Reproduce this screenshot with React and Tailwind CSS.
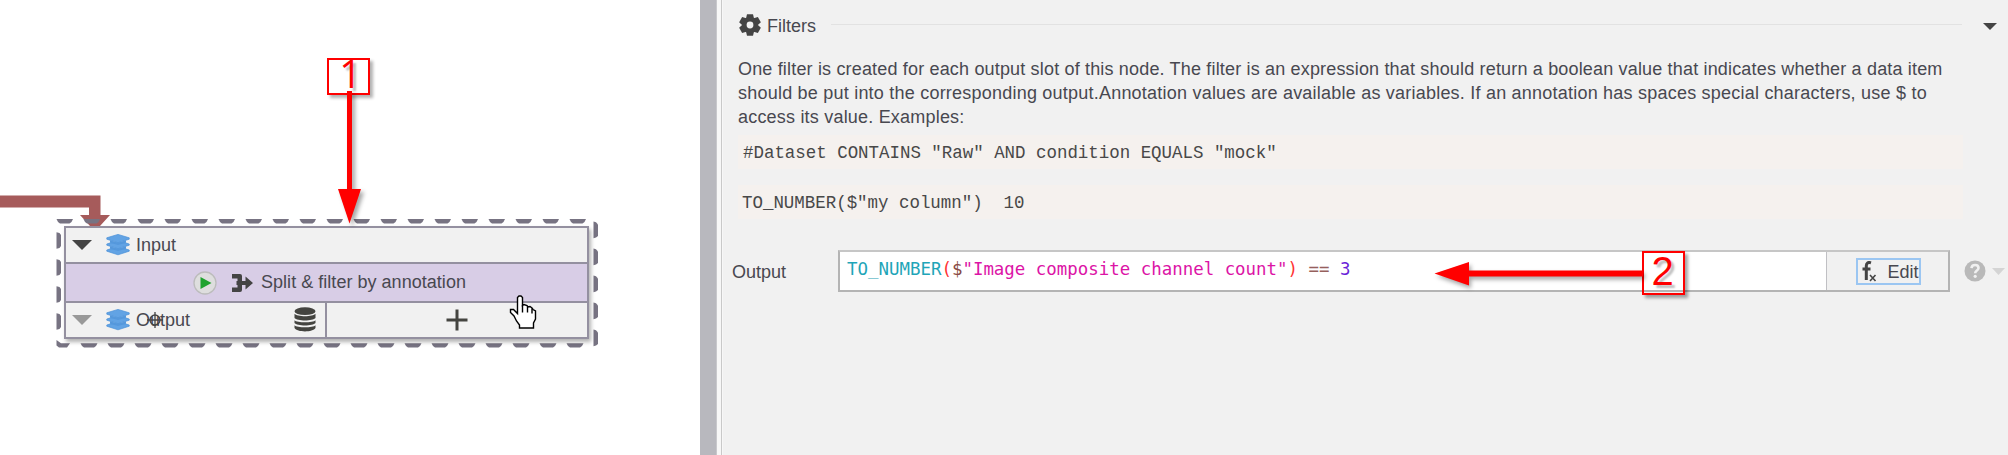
const range = (n) => Array.from({ length: n }, (_, i) => i);

function LayersIcon() {
  return (
    <svg className="h-[22px] w-[24px] shrink-0" viewBox="0 0 24 22">
      <g stroke="#4b90d8" strokeWidth="0.700" fill="#62a3e4">
        <path d="M.8 16L4.500 14.800H19.500L23.200 16V17.200L12 20.800L.8 17.200Z" />
        <path d="M.8 10L4.500 8.800H19.500L23.200 10V11.200L12 14.800L.8 11.200Z" />
        <path d="M.8 3.800L12 .4L23.200 3.800V5.200L12 8.800L.8 5.200Z" />
      </g>
      <path d="M4 6.300L12 8.800L20 6.300V8.800L12 11L4 8.800ZM4 12.300L12 14.800L20 12.300V14.800L12 17L4 14.800Z" fill="#5598dc" />
    </svg>
  );
}

function Triangle({ className }) {
  return (
    <svg className={className} viewBox="0 0 20 10" preserveAspectRatio="none">
      <path d="M0 0H20L10 10Z" fill="currentColor" />
    </svg>
  );
}

function DatabaseIcon() {
  return (
    <svg className="h-[25px] w-[22px]" viewBox="0 0 22 25" fill="#444440">
      <ellipse cx="11" cy="4.2" rx="10.5" ry="3.9" />
      <path d="M.5 6.7C3 10 19 10 21.500 6.700V11C19 14.300 3 14.300 .5 11Z" />
      <path d="M.5 13.200C3 16 19 16 21.500 13.200V16C19 19.300 3 19.300 .5 16Z" />
      <path d="M.5 18.200C3 21 19 21 21.500 18.200V21C19 25.500 3 25.500 .5 21Z" />
    </svg>
  );
}

function GearIcon() {
  return (
    <svg className="h-[22px] w-[22px] shrink-0" viewBox="-11 -11 22 22">
      <g fill="#444">
        <circle r="8" />
        {range(6).map((i) => (
          <path key={i} d="M-4 -6.500L-3 -10.800H3L4 -6.500Z" transform={`rotate(${i * 60})`} />
        ))}
      </g>
      <circle r="3.400" fill="#f1f1f1" />
    </svg>
  );
}

function SelectionFrame() {
  return (
    <svg className="absolute left-[56px] top-[218px]" width="543" height="131" viewBox="56 218 543 131" fill="#777382">
      {range(20).map((i) => (
        <path key={i} transform={`translate(${i * 27} 0)`} d="M56.500 219H73L71.500 222L69.500 223.500H60L58 222Z" />
      ))}
      {range(19).map((i) => (
        <path key={i} transform={`translate(${i * 27} 0)`} d="M80.500 343.200H97.500L96 346L94 347.500H84L82 346Z" />
      ))}
      {range(4).map((i) => (
        <path key={i} transform={`translate(0 ${i * 27})`} d="M56.500 232.300L59.500 233L61 235V246L59.500 248L56.500 248.700Z" />
      ))}
      {range(5).map((i) => (
        <path key={i} transform={`translate(0 ${i * 27})`} d="M593.500 221.500L596 222.300L598 224.500V236L596 237.500L593.500 238.200Z" />
      ))}
      <path d="M56.500 340L61 343.200H70L67 347.500H59L56.500 345.500Z" />
    </svg>
  );
}

function FlowNode() {
  return (
    <div className="absolute left-[64px] top-[226px] flex h-[113px] w-[525px] flex-col border-2 border-[#9490a0] bg-[#f1f1f1] shadow-[2px_3px_4px_rgba(0,0,0,0.3)]">
      <div className="flex h-[36px] items-center border-b-2 border-[#9490a0] pl-[6px]">
        <Triangle className="h-[10px] w-[20px] text-[#444]" />
        <div className="ml-[14px] flex items-center gap-[6px]">
          <LayersIcon />
          <span>Input</span>
        </div>
      </div>
      <div className="flex h-[39px] items-center border-b-2 border-[#9490a0] bg-[#d8cde6] pl-[127px]">
        <svg className="h-[24px] w-[24px]" viewBox="0 0 24 24">
          <circle cx="12" cy="12" r="11" fill="#dedede" stroke="#bcbcbc" strokeWidth="1.300" />
          <path d="M7.500 6L18.500 12L7.500 18Z" fill="#1fa22e" />
        </svg>
        <svg className="ml-[15px] h-[20px] w-[21px]" viewBox="0 0 21 20" fill="#444">
          <path d="M0 1H8Q10 1 10 3V8H13.500V3.500L21 10L13.500 16.500V12H10V17Q10 19 8 19H0V14.500H5.500V12H4.500V8H5.500V5.500H0Z" />
        </svg>
        <span className="ml-[8px] tracking-[0.030px]">Split &amp; filter by annotation</span>
      </div>
      <div className="flex min-h-0 flex-1 items-stretch">
        <div className="flex w-[261px] items-center border-r-2 border-[#9490a0] pl-[6px]">
          <Triangle className="h-[10px] w-[20px] text-[#999]" />
          <div className="ml-[14px] flex items-center gap-[6px]">
            <LayersIcon />
            <span className="relative">
              Output
              <svg className="absolute left-[11px] top-[5px] h-[16px] w-[16px]" viewBox="0 0 16 16" fill="none" stroke="#444" strokeWidth="1.300">
                <circle cx="8" cy="8" r="5" />
                <path d="M8 0V16M0 8H16" />
              </svg>
            </span>
          </div>
          <div className="mb-px ml-auto mr-[9px]">
            <DatabaseIcon />
          </div>
        </div>
        <div className="flex flex-1 items-center justify-center pb-px">
          <svg className="h-[22px] w-[22px]" viewBox="0 0 22 22">
            <path d="M11 0.500V21.500M.5 11H21.500" stroke="#444440" strokeWidth="3" />
          </svg>
        </div>
      </div>
    </div>
  );
}

function HandCursor() {
  return (
    <svg className="absolute left-[509px] top-[295px]" width="28" height="35" viewBox="0 0 28 35">
      <path
        d="M8.500 2.500L10 1H12L13.500 2.500V10.500L15 9.500L18 10.500L19 12L21 11.500L23 13L24 14.500L26.500 16V24L24.500 28V33H10.500V30L7.500 26L5 21L1.500 17.500V14.500H4.500L8.500 18.500Z"
        fill="#fff"
        stroke="#000"
        strokeWidth="1.400"
      />
      <path d="M13.500 10V17.500M18.500 11.500V17.500M23 13.500V18.500" stroke="#000" strokeWidth="1.400" />
    </svg>
  );
}

function Canvas() {
  return (
    <section className="relative h-full w-[700px] shrink-0 overflow-hidden bg-white">
      <svg className="absolute left-0 top-[190px]" width="120" height="45" viewBox="0 190 120 45">
        <path d="M0 195.500H100.500V215H110L95 231.500L80 215H89V207.500H0Z" fill="#a65b5b" />
      </svg>
      <SelectionFrame />
      <FlowNode />
      <HandCursor />
      <div className="absolute left-[327px] top-[58px] flex h-[37px] w-[43px] items-center justify-center border-2 border-[#ff0000] font-['Open_Sans',sans-serif] text-[39px] leading-none text-[#ff0000] shadow-[3px_3px_3px_rgba(0,0,0,0.3)]">
        <span className="relative -top-[4px] left-[2px] [text-shadow:3px_3px_2px_rgba(0,0,0,0.25)]">1</span>
      </div>
      <svg className="absolute left-[330px] top-[85px] drop-shadow-[3px_3px_2px_rgba(0,0,0,0.35)]" width="40" height="140" viewBox="330 85 40 140">
        <path d="M347 91H352V189H361L349.500 223.500L338 189H347Z" fill="#f00" />
      </svg>
    </section>
  );
}

function ExpressionField() {
  return (
    <div className="relative flex h-[42px] w-[1112px] border-2 border-t-[#c6c6c6] border-r-[#b4b4b4] border-b-[#b4b4b4] border-l-[#b4b4b4] bg-white">
      <div className="flex flex-1 items-center whitespace-pre pb-[3px] pl-[7px] font-['DejaVu_Sans_Mono',monospace] text-[17.430px] text-[#1fa5b8]">
        <span>TO_NUMBER</span>
        <span className="text-[#f33]">(</span>
        <span className="text-[#8a4b45]">$</span>
        <span className="text-[#dc14a6]">"Image composite channel count"</span>
        <span className="text-[#f33]">)</span>
        <span className="text-[#96605c]"> == </span>
        <span className="text-[#6a1fd8]">3</span>
      </div>
      <div className="flex w-[122px] items-center justify-center border-l border-[#c0c0c4] bg-[#f1f1f1]">
        <div className="ml-px flex h-[27px] w-[65px] items-center border-2 border-[#9bc6f2] pl-[4px]">
          <svg className="h-[21px] w-[15px] shrink-0" viewBox="0 0 15 21" fill="none" stroke="#444">
            <path d="M9 1.800C6 .8 4.300 2 4.300 5V19M.5 8H8.500" strokeWidth="3" />
            <path d="M8 14L13.500 20M13.500 14L8 20" strokeWidth="1.600" />
          </svg>
          <span className="ml-[11px] pt-[2px]">Edit</span>
        </div>
      </div>
      <div className="absolute left-[802px] top-[-1px] flex h-[44px] w-[43px] items-center justify-center border-2 border-[#ff0000] text-[40px] leading-none text-[#ff0000] shadow-[3px_3px_3px_rgba(0,0,0,0.35)]">
        <span className="relative -left-px -top-[2px] [text-shadow:3px_3px_2px_rgba(0,0,0,0.25)]">2</span>
      </div>
      <svg className="absolute left-[590px] top-[5px] drop-shadow-[2px_3px_2px_rgba(0,0,0,0.35)]" width="213" height="32" viewBox="1430 257 213 32">
        <path d="M1434.500 273.500L1469 262V270.500H1643V276.500H1469V285.500Z" fill="#f00" />
      </svg>
    </div>
  );
}

function FiltersPanel() {
  return (
    <section className="flex min-w-0 flex-1 flex-col bg-[#f1f1f1]">
      <header className="flex h-[50px] items-center pl-[16px]">
        <GearIcon />
        <h2 className="ml-[6px] w-[64px] pt-[2px]">Filters</h2>
        <div className="mb-px h-px w-[1131px] bg-[#e2e2e2]" />
        <Triangle className="ml-[21px] mt-[2px] h-[7px] w-[14px] text-[#444]" />
      </header>
      <div className="ml-[15px] mt-[7px] w-[1225px]">
        <p className="whitespace-nowrap leading-[24px]">
          <span className="tracking-[0.170px]">One filter is created for each output slot of this node. The filter is an expression that should return a boolean value that indicates whether a data item</span>
          <br />
          <span className="tracking-[0.220px]">should be put into the corresponding output.Annotation values are available as variables. If an annotation has spaces special characters, use $ to</span>
          <br />
          <span className="tracking-[0.200px]">access its value. Examples:</span>
        </p>
        <pre className="mt-[6px] h-[34px] bg-[#f5f1ee] pl-[5px] font-['Liberation_Mono',monospace] text-[17.450px] leading-[36px] text-[#484848]">{'#Dataset CONTAINS "Raw" AND condition EQUALS "mock"'}</pre>
        <pre className="mt-[16px] h-[34px] bg-[#f5f1ee] pl-[4px] font-['Liberation_Mono',monospace] text-[17.450px] leading-[36px] text-[#484848]">{'TO_NUMBER($"my column")  10'}</pre>
      </div>
      <div className="mt-[31px] flex items-center pl-[9px]">
        <label className="w-[106px] pt-[3px]">Output</label>
        <ExpressionField />
        <svg className="ml-[14px] h-[22px] w-[22px]" viewBox="0 0 22 22">
          <circle cx="11" cy="11" r="10.500" fill="#b9b9b9" />
          <path d="M7.500 8.200C7.800 3.800 14.500 4 14.500 8C14.500 10.600 11.200 10.500 11.200 13.200" fill="none" stroke="#f1f1f1" strokeWidth="2.600" />
          <circle cx="11.200" cy="16.300" r="1.600" fill="#f1f1f1" />
        </svg>
        <Triangle className="ml-[6px] h-[7px] w-[13px] text-[#d4d4d4]" />
      </div>
    </section>
  );
}

export default function App() {
  return (
    <main className="flex h-[455px] w-[2008px] overflow-hidden bg-white font-['Liberation_Sans',Arial,sans-serif] text-[18px] text-[#484850]">
      <Canvas />
      <div className="flex w-[23px] shrink-0 bg-[#f7f7f7]">
        <div className="w-[17px] border-r border-[#c8c8cc] bg-[#b8b8be]" />
        <div className="ml-[4px] w-px bg-[#c9c9c9]" />
      </div>
      <FiltersPanel />
    </main>
  );
}
